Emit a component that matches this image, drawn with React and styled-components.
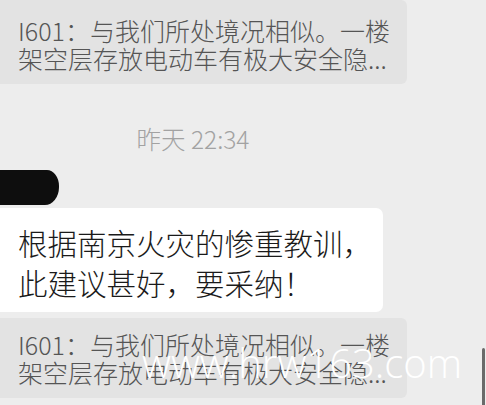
import React from 'react';
import styled, { createGlobalStyle } from 'styled-components';

const GlobalStyle = createGlobalStyle`
	body {
		margin: 0;
		background: #ededed;
		font-family: "Noto Sans CJK SC", "Noto Sans", sans-serif;
	}
`;

const App = () => {
	return (
		<Page>
			<GlobalStyle />
			<Feed>
				<QuoteBubble $first>
					I601：与我们所处境况相似。一楼
					<br />
					架空层存放电动车有极大安全隐...
				</QuoteBubble>
				<TimeRow>昨天 22:34</TimeRow>
				<HiddenName />
				<Bubble>
					根据南京火灾的惨重教训，
					<br />
					此建议甚好，要采纳！
				</Bubble>
				<QuoteBubble>
					I601：与我们所处境况相似。一楼
					<br />
					架空层存放电动车有极大安全隐...
				</QuoteBubble>
			</Feed>
			<Watermark>www.hrw163.com</Watermark>
			<ScrollThumb />
		</Page>
	);
};

export default App;

const Page = styled.div`
	position: relative;
	width: 486px;
	height: 405px;
	overflow: hidden;
	background: #ededed;
`;

const Feed = styled.div`
	display: flex;
	flex-direction: column;
	align-items: flex-start;
`;

const QuoteBubble = styled.div`
	box-sizing: border-box;
	width: 407px;
	padding: ${(p) => (p.$first ? '16px' : '12px')} 18px 12px;
	background: #e3e3e3;
	border-radius: 0 6px 6px 0;
	color: #555555;
	font-size: 25px;
	font-weight: 300;
	line-height: 28px;
	white-space: nowrap;
	margin-top: ${(p) => (p.$first ? '0' : '6px')};
`;

const TimeRow = styled.div`
	width: 386px;
	margin-top: 41px;
	text-align: center;
	color: #a2a2a2;
	font-size: 24.5px;
	font-weight: 300;
	line-height: 28px;
`;

const HiddenName = styled.div`
	width: 59px;
	height: 35px;
	margin-top: 17px;
	background: #0e0e0e;
	border-radius: 0 12px 14px 0 / 0 16px 18px 0;
`;

const Bubble = styled.div`
	box-sizing: border-box;
	width: 383px;
	margin-top: 3px;
	padding: 14px 18px 10px;
	background: #ffffff;
	border-radius: 0 7px 7px 0;
	color: #1a1a1a;
	font-size: 29.5px;
	font-weight: 300;
	line-height: 40px;
	white-space: nowrap;
`;

const Watermark = styled.div`
	position: absolute;
	left: 142px;
	top: 343px;
	color: #ffffff;
	font-family: "Open Sans", sans-serif;
	font-weight: 300;
	font-size: 40px;
	line-height: 40px;
	white-space: nowrap;
	pointer-events: none;
`;

const ScrollThumb = styled.div`
	position: absolute;
	right: 1px;
	top: 348px;
	width: 3px;
	height: 62px;
	background: #6a6a6a;
	border-radius: 2px;
`;
